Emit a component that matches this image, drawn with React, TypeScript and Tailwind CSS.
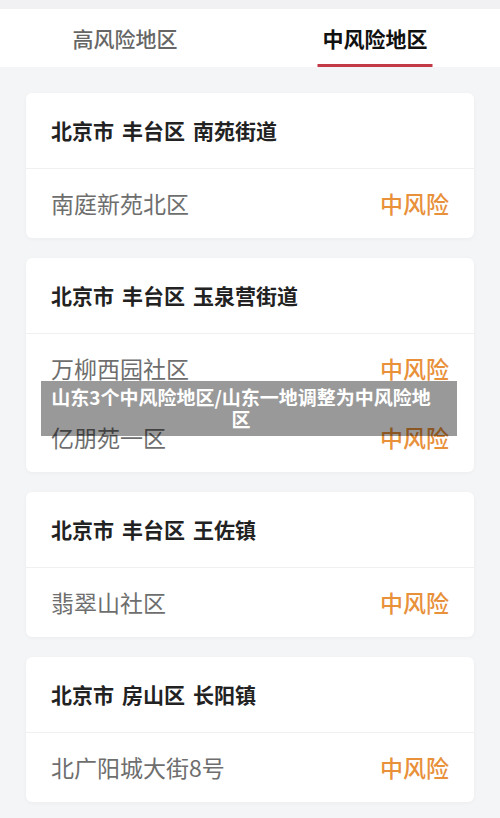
import React from "react";

type Card = { title: string[]; rows: string[] };

const cards: Card[] = [
  { title: ["北京市", "丰台区", "南苑街道"], rows: ["南庭新苑北区"] },
  { title: ["北京市", "丰台区", "玉泉营街道"], rows: ["万柳西园社区", "亿朋苑一区"] },
  { title: ["北京市", "丰台区", "王佐镇"], rows: ["翡翠山社区"] },
  { title: ["北京市", "房山区", "长阳镇"], rows: ["北广阳城大街8号"] },
];

export default function App() {
  return (
    <div className="relative w-[500px] h-[818px] overflow-hidden bg-[#f4f5f7] font-['Noto_Sans_CJK_SC','Noto_Sans',sans-serif]">
      <div className="h-[9px] bg-[#f1f1f3]" />
      <div className="flex h-[58px] bg-white">
        <div className="flex flex-1 items-center justify-center text-[21px] leading-none font-medium text-[#666]">
          高风险地区
        </div>
        <div className="relative flex flex-1 items-center justify-center text-[21px] leading-none font-bold text-[#111]">
          中风险地区
          <div className="absolute bottom-0 left-1/2 h-[3px] w-[115px] -translate-x-1/2 bg-[#c23a45]" />
        </div>
      </div>
      <div className="flex flex-col gap-[20px] px-[26px] pt-[26px]">
        {cards.map((c, i) => (
          <div key={i} className="rounded-[6px] bg-white shadow-[0_1px_4px_rgba(0,0,0,0.04)]">
            <div className="flex h-[76px] items-center gap-[8px] border-b border-[#f0f0f0] pl-[25px] text-[21px] leading-none font-bold text-[#222]">
              {c.title.map((t, j) => (
                <span key={j}>{t}</span>
              ))}
            </div>
            {c.rows.map((r, j) => (
              <div key={j} className="flex h-[69px] items-center justify-between pl-[25px] pr-[25px] text-[23px] leading-none">
                <span className="text-[#6e6e6e]">{r}</span>
                <span className="font-medium text-[#e8903a]">中风险</span>
              </div>
            ))}
          </div>
        ))}
      </div>
      <div className="absolute left-[41px] top-[381px] flex h-[55px] w-[416px] bg-black/40 pt-[5px]">
        <div className="ml-[5px] w-[390px] text-center text-[19px] leading-[22px] font-bold text-white">
          山东3个中风险地区/山东一地调整为中风险地区
        </div>
      </div>
    </div>
  );
}
